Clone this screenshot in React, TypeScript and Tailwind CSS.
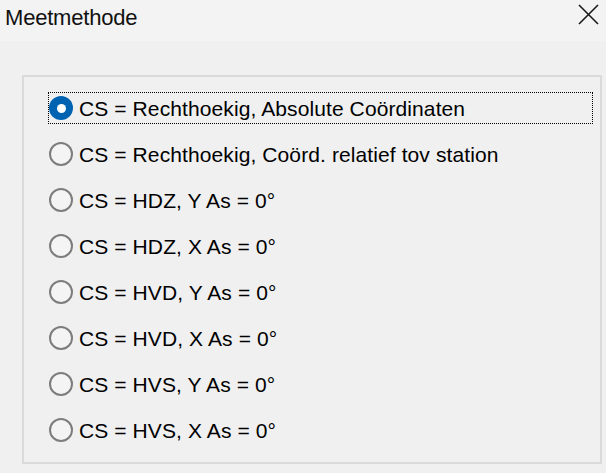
import { useState } from 'react';

const options = [
  'CS = Rechthoekig, Absolute Coördinaten',
  'CS = Rechthoekig, Coörd. relatief tov station',
  'CS = HDZ, Y As = 0°',
  'CS = HDZ, X As = 0°',
  'CS = HVD, Y As = 0°',
  'CS = HVD, X As = 0°',
  'CS = HVS, Y As = 0°',
  'CS = HVS, X As = 0°',
];

function Radio({ checked }: { checked: boolean }) {
  if (checked) {
    return (
      <span className="w-[24px] h-[24px] rounded-full bg-[#0063b1] flex items-center justify-center shrink-0">
        <span className="w-[9px] h-[9px] rounded-full bg-white" />
      </span>
    );
  }
  return <span className="w-[24px] h-[24px] rounded-full border-2 border-[#7d7d7d] bg-[#f4f4f4] shrink-0" />;
}

export default function App() {
  const [selected, setSelected] = useState(0);

  return (
    <div className="w-[606px] h-[473px] bg-[#f0f0f0] overflow-hidden" style={{ fontFamily: '"Liberation Sans", Arial, sans-serif' }}>
      {/* Title bar */}
      <div className="h-[41px] bg-[#f3f3f3] flex items-start justify-between pl-[5px] pr-[7px] pt-[5px]">
        <span className="text-[22px] text-[#111] tracking-[-0.2px] leading-[26px]">Meetmethode</span>
        <svg width="21" height="21" viewBox="0 0 21 21" className="mt-[-1px]">
          <path d="M1 1 L20 20 M20 1 L1 20" stroke="#1a1a1a" strokeWidth="1.6" fill="none" />
        </svg>
      </div>

      {/* Group box */}
      <div className="ml-[22px] mt-[34px] w-[580px] h-[389px] border-2 border-[#dadada] pt-[8px] pl-[24px]">
        {options.map((label, i) => (
          <div key={label} className="h-[46px] flex items-center">
            <label
              onClick={() => setSelected(i)}
              className={`w-[545px] h-[32px] flex items-center gap-[6px] border border-dotted cursor-default ${
                i === selected ? 'border-black' : 'border-transparent'
              }`}
            >
              <Radio checked={i === selected} />
              <span className="text-[21px] text-black leading-none whitespace-nowrap tracking-[0.1px]">{label}</span>
            </label>
          </div>
        ))}
      </div>
    </div>
  );
}
